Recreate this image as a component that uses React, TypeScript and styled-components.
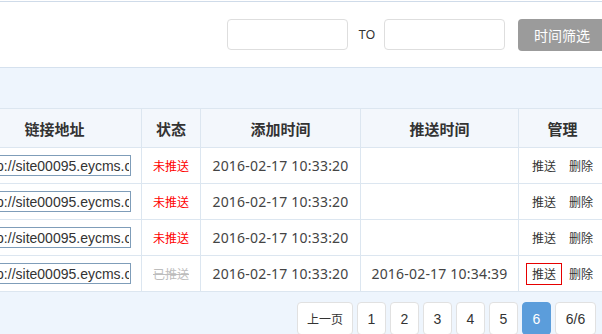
import React from 'react';
import styled, { createGlobalStyle } from 'styled-components';

const GlobalStyle = createGlobalStyle`
  html, body {
    margin: 0;
    padding: 0;
    background: #fff;
    overflow: hidden;
  }
  body {
    font-family: "Liberation Sans", "Noto Sans CJK SC", sans-serif;
    color: #333;
  }
`;

const Viewport = styled.div`
  width: 602px;
  height: 334px;
  overflow: hidden;
`;

const Sheet = styled.div`
  width: 639px;
  margin-left: -33px;
  padding-top: 1px;
`;

const FilterBar = styled.div`
  display: flex;
  justify-content: flex-end;
  align-items: center;
  height: 65px;
  border-top: 1px solid #cfdbe9;
  border-bottom: 1px solid #d5e1ee;
  background: #fff;
`;

const DateInput = styled.input`
  box-sizing: border-box;
  width: 121px;
  height: 31px;
  border: 1px solid #dedede;
  border-radius: 4px;
  outline: none;
  padding: 0 6px;
`;

const ToLabel = styled.span`
  margin: 0 9px 0 11px;
  font-size: 12px;
  color: #333;
`;

const FilterButton = styled.button`
  box-sizing: border-box;
  width: 88px;
  height: 32px;
  margin-left: 13px;
  border: none;
  border-radius: 4px;
  background: #9b9b9b;
  color: #fff;
  font-family: "Noto Sans CJK SC", sans-serif;
  font-size: 14px;
  padding: 0;
`;

const Band = styled.div<{ $h: number }>`
  height: ${(p) => p.$h}px;
  background: #eef5fd;
`;

const Table = styled.table`
  width: 639px;
  table-layout: fixed;
  border-collapse: collapse;
  background: #fff;
`;

const HeadRow = styled.tr`
  height: 39px;
  background: #f3f7fc;
`;

const HeadCell = styled.th`
  border: 1px solid #dce6f0;
  padding: 0;
  font-family: "Noto Sans CJK SC", sans-serif;
  font-size: 15px;
  font-weight: bold;
  color: #333;
  text-align: center;
`;

const BodyRow = styled.tr`
  height: 36px;
`;

const Cell = styled.td`
  border: 1px solid #dce6f0;
  padding: 0;
  text-align: center;
  vertical-align: middle;
`;

const LinkInput = styled.input`
  box-sizing: border-box;
  width: 152px;
  height: 21px;
  border: 1px solid #7f9db9;
  padding: 0 1px;
  font-family: "Liberation Sans", sans-serif;
  font-size: 14px;
  color: #333;
  outline: none;
  vertical-align: middle;
`;

const Status = styled.span<{ $done?: boolean }>`
  font-family: "Noto Sans CJK SC", sans-serif;
  font-size: 12px;
  color: ${(p) => (p.$done ? '#bdbdbd' : '#f00')};
  text-decoration: ${(p) => (p.$done ? 'line-through' : 'none')};
`;

const DateText = styled.span`
  font-family: "Noto Sans", sans-serif;
  font-size: 14px;
  letter-spacing: 0.2px;
  color: #444;
`;

const Actions = styled.div`
  display: flex;
  justify-content: center;
  gap: 1px;
`;

const ActionLink = styled.span<{ $active?: boolean }>`
  box-sizing: border-box;
  display: inline-flex;
  align-items: center;
  justify-content: center;
  width: 36px;
  height: 22px;
  border: 1px solid ${(p) => (p.$active ? '#e60000' : 'transparent')};
  font-family: "Noto Sans CJK SC", sans-serif;
  font-size: 12px;
  color: #333;
`;

const Pager = styled.div`
  display: flex;
  justify-content: flex-end;
  gap: 4px;
  height: 43px;
  padding: 10px 10px 0 0;
  box-sizing: border-box;
  background: #eef5fd;
`;

const PageButton = styled.span<{ $active?: boolean; $w?: number }>`
  box-sizing: border-box;
  display: inline-flex;
  align-items: center;
  justify-content: center;
  width: ${(p) => p.$w ?? 29}px;
  height: 33px;
  border: 1px solid ${(p) => (p.$active ? '#5b9ddb' : '#e1e1e1')};
  border-radius: 4px;
  background: ${(p) => (p.$active ? '#5b9ddb' : '#fff')};
  color: ${(p) => (p.$active ? '#fff' : '#333')};
  font-family: "Liberation Sans", "Noto Sans CJK SC", sans-serif;
  font-size: 14px;
`;

const PrevLabel = styled.span`
  font-family: "Noto Sans CJK SC", sans-serif;
  font-size: 12px;
`;

const rows = [
  { done: false, pushed: '' },
  { done: false, pushed: '' },
  { done: false, pushed: '' },
  { done: true, pushed: '2016-02-17 10:34:39' },
];

export default function App() {
  return (
    <Viewport>
      <GlobalStyle />
      <Sheet>
        <FilterBar>
          <DateInput />
          <ToLabel>TO</ToLabel>
          <DateInput />
          <FilterButton>时间筛选</FilterButton>
        </FilterBar>
        <Band $h={40} />
        <Table>
          <colgroup>
            <col style={{ width: 174 }} />
            <col style={{ width: 59 }} />
            <col style={{ width: 160 }} />
            <col style={{ width: 158 }} />
            <col style={{ width: 88 }} />
          </colgroup>
          <thead>
            <HeadRow>
              <HeadCell>链接地址</HeadCell>
              <HeadCell>状态</HeadCell>
              <HeadCell>添加时间</HeadCell>
              <HeadCell>推送时间</HeadCell>
              <HeadCell>管理</HeadCell>
            </HeadRow>
          </thead>
          <tbody>
            {rows.map((r, i) => (
              <BodyRow key={i}>
                <Cell>
                  <LinkInput readOnly defaultValue="http://site00095.eycms.cn" />
                </Cell>
                <Cell>
                  <Status $done={r.done}>{r.done ? '已推送' : '未推送'}</Status>
                </Cell>
                <Cell>
                  <DateText>2016-02-17 10:33:20</DateText>
                </Cell>
                <Cell>
                  <DateText>{r.pushed}</DateText>
                </Cell>
                <Cell>
                  <Actions>
                    <ActionLink $active={r.done}>推送</ActionLink>
                    <ActionLink>删除</ActionLink>
                  </Actions>
                </Cell>
              </BodyRow>
            ))}
          </tbody>
        </Table>
        <Pager>
          <PageButton $w={56}>
            <PrevLabel>上一页</PrevLabel>
          </PageButton>
          {[1, 2, 3, 4, 5, 6].map((n) => (
            <PageButton key={n} $active={n === 6}>
              {n}
            </PageButton>
          ))}
          <PageButton $w={41}>6/6</PageButton>
        </Pager>
      </Sheet>
    </Viewport>
  );
}
